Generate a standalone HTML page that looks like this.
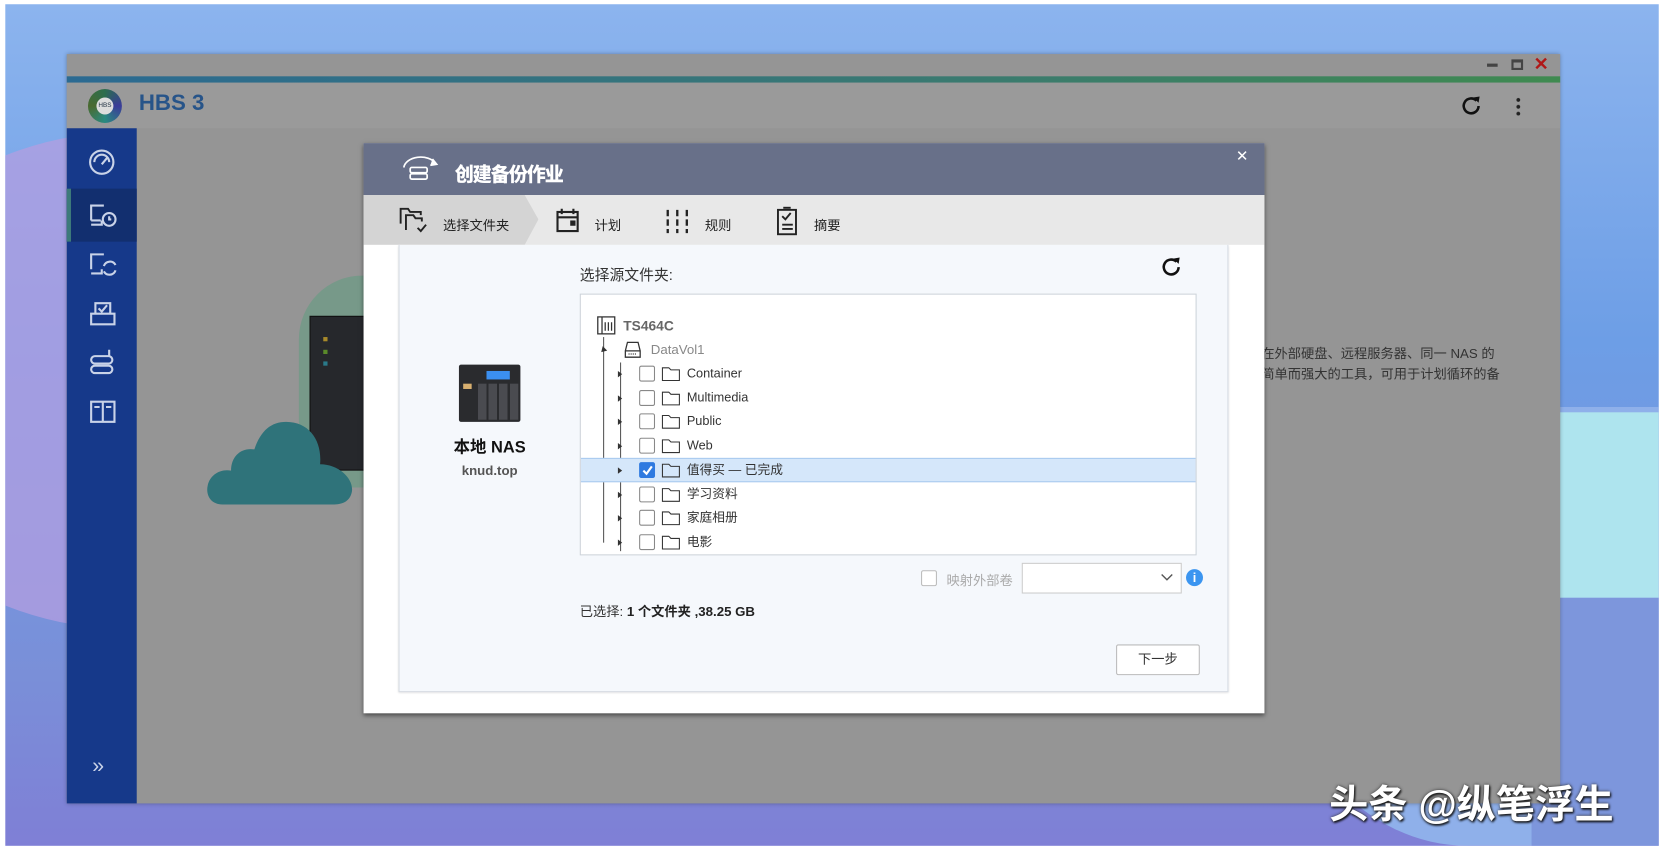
<!DOCTYPE html>
<html><head><meta charset="utf-8"><style>
*{margin:0;padding:0;box-sizing:border-box}
html,body{width:1662px;height:851px;overflow:hidden;background:#fff}
#s{position:absolute;left:0;top:0;width:1568px;height:802px;transform:scale(1.0599);transform-origin:0 0;font-family:"Liberation Sans","Noto Sans CJK SC",sans-serif;overflow:hidden}
.a{position:absolute}
.desk{left:5px;top:4px;width:1560px;height:794px;background:linear-gradient(180deg,#8cb4ee 0%,#6d9ee6 40%,#7a8fd8 80%,#7f7fd6 100%);overflow:hidden}
.row{position:absolute;left:0;height:23px;width:582px;font-size:12px;color:#333;line-height:23px}
.row .tri{position:absolute;left:35px;top:9px;width:0;height:0;border-left:4px solid #333;border-top:3px solid transparent;border-bottom:3px solid transparent}
.row .cb{position:absolute;left:55px;top:4px;width:15px;height:15px;border:1px solid #888;border-radius:2px;background:#fff}
.row .fd{position:absolute;left:76px;top:5px}
.row span.t{position:absolute;left:100px}
</style></head><body><div id="s">
<div class="a desk">
 <div class="a" style="left:-160px;top:120px;width:560px;height:470px;border-radius:50%;background:#b39ee0;opacity:.75"></div>
 <div class="a" style="left:1200px;top:380px;width:360px;height:414px;border-radius:50% 0 0 50%;background:#8fb0ea"></div>
 <div class="a" style="left:1460px;top:385px;width:100px;height:175px;background:#aee4ee"></div>
 <div class="a" style="left:1440px;top:560px;width:120px;height:234px;background:#7d96dc"></div>
</div>
<div class="a" style="left:63px;top:51px;width:1409px;height:707px;background:#959595;box-shadow:0 0 4px rgba(0,0,0,.3)"></div>
<div class="a" style="left:63px;top:72px;width:1409px;height:6px;background:linear-gradient(90deg,#2b6a92,#3a7a70 60%,#3f8a50)"></div>
<div class="a" style="left:63px;top:78px;width:1409px;height:43px;background:#9a9a9a"></div>
<div class="a" style="left:1403px;top:60px;width:10px;height:3px;background:#444"></div>
<div class="a" style="left:1426px;top:56px;width:11px;height:10px;border:2px solid #444;border-top-width:3px"></div>
<div class="a" style="left:1447px;top:51px;color:#b01818;font-size:17px;font-weight:bold">✕</div>
<div class="a" style="left:83px;top:84px;width:32px;height:32px;border-radius:50%;background:conic-gradient(#2c6e4e,#3b3b9a,#2a8a80,#4a6a30,#2c6e4e)"></div>
<div class="a" style="left:91px;top:92px;width:16px;height:16px;border-radius:50%;background:#ddd;font-size:6px;line-height:16px;text-align:center;color:#234">HBS</div>
<div class="a" style="left:131px;top:86px;font-size:21px;font-weight:bold;color:#275489">HBS 3</div>
<svg class="a" style="left:1378px;top:89px" width="20" height="20" viewBox="0 0 20 20"><path d="M15 6A7 7 0 1 0 17 11" fill="none" stroke="#111" stroke-width="2.4"/><path d="M12 3L18 2L17 8Z" fill="#111"/></svg>
<div class="a" style="left:1430px;top:91px;width:5px;height:18px;background:radial-gradient(circle,#222 1.6px,transparent 2px) 0 0/5px 6.5px"></div>
<div class="a" style="left:63px;top:121px;width:66px;height:637px;background:#16398a"></div>
<div class="a" style="left:63px;top:178px;width:66px;height:50px;background:#122f6f"></div>
<div class="a" style="left:63px;top:178px;width:4px;height:50px;background:#3d7a7a"></div>
<svg class="a" style="left:82px;top:139px" width="30" height="30" viewBox="0 0 30 30" fill="none" stroke="#c9d3e8" stroke-width="2"><circle cx="14" cy="14" r="11"/><path d="M7 14a7 7 0 0 1 14 0M14 16l5-6"/></svg>
<svg class="a" style="left:83px;top:190px" width="30" height="28" viewBox="0 0 30 28" fill="none" stroke="#c9d3e8" stroke-width="2"><path d="M3 18V4h12M3 18h9M3 22h10v-4"/><circle cx="20" cy="17" r="6"/><path d="M20 14v3h2"/></svg>
<svg class="a" style="left:83px;top:236px" width="30" height="28" viewBox="0 0 30 28" fill="none" stroke="#c9d3e8" stroke-width="2"><path d="M3 18V4h12M3 22h10v-4"/><path d="M15 15a6 6 0 0 1 11-1M26 19a6 6 0 0 1-11 1"/></svg>
<svg class="a" style="left:83px;top:282px" width="30" height="28" viewBox="0 0 30 28" fill="none" stroke="#c9d3e8" stroke-width="2"><path d="M3 14h22v10H3zM7 14V4h14v10M10 9l3 3 5-6"/></svg>
<svg class="a" style="left:83px;top:328px" width="30" height="28" viewBox="0 0 30 28" fill="none" stroke="#c9d3e8" stroke-width="2"><rect x="3" y="8" width="20" height="7" rx="3.5"/><rect x="3" y="17" width="20" height="7" rx="3.5"/><path d="M20 8V2"/></svg>
<svg class="a" style="left:83px;top:375px" width="30" height="28" viewBox="0 0 30 28" fill="none" stroke="#c9d3e8" stroke-width="2"><rect x="3" y="4" width="22" height="19"/><path d="M14 4v19M6 9h5M17 9h5"/></svg>
<div class="a" style="left:87px;top:712px;color:#c9d3e8;font-size:20px">»</div>
<div class="a" style="left:282px;top:260px;width:120px;height:200px;border-radius:60px 60px 0 0;background:#6f9a86;opacity:.8"></div>
<div class="a" style="left:292px;top:298px;width:60px;height:146px;background:#26282c;border:1px solid #111"></div>
<div class="a" style="left:305px;top:318px;width:4px;height:4px;background:#a88a2a"></div>
<div class="a" style="left:305px;top:330px;width:4px;height:4px;background:#5a8a2a"></div>
<div class="a" style="left:305px;top:341px;width:4px;height:4px;background:#2a7a8a"></div>
<svg class="a" style="left:194px;top:396px" width="140" height="82" viewBox="0 0 140 82"><path d="M16 80C4 80 0 70 2 62C4 52 14 46 24 48C24 34 34 26 46 28C52 10 62 2 76 2C98 2 110 20 108 42C126 42 140 56 138 68C136 78 128 80 120 80Z" fill="#2f737a"/></svg>
<div class="a" style="left:1190px;top:325px;font-size:12.5px;color:#333;line-height:19px">在外部硬盘、远程服务器、同一 NAS 的<br>简单而强大的工具，可用于计划循环的备</div>
<div class="a" style="left:343px;top:135px;width:850px;height:538px;background:#fff;box-shadow:0 2px 4px rgba(0,0,0,.5)"></div>
<div class="a" style="left:343px;top:135px;width:850px;height:49px;background:#687089"></div>
<svg class="a" style="left:378px;top:146px" width="38" height="26" viewBox="0 0 38 26" fill="none" stroke="#fff" stroke-width="1.6"><path d="M3 12A16 11 0 0 1 33 8"/><path d="M30 4l4 5-6 1" fill="#fff"/><rect x="9" y="12" width="16" height="5" rx="1.5"/><rect x="9" y="18" width="16" height="5" rx="1.5"/></svg>
<div class="a" style="left:429px;top:151px;font-size:18px;font-weight:900;color:#fff;letter-spacing:-1px">创建备份作业</div>
<div class="a" style="left:1166px;top:139px;font-size:14px;color:#fff">✕</div>
<div class="a" style="left:343px;top:184px;width:850px;height:47px;background:#e8e8e8"></div>
<div class="a" style="left:343px;top:184px;width:165px;height:47px;background:#d4d4d4;clip-path:polygon(0 0,152px 0,165px 23px,152px 47px,0 47px)"></div>
<svg class="a" style="left:376px;top:195px" width="32" height="26" viewBox="0 0 32 26" fill="none" stroke="#222" stroke-width="1.8"><path d="M2 16V2h7l2 3h10v3"/><path d="M7 22V8h7l2 3h6v3"/><path d="M18 20l3 3 5-6"/></svg>
<div class="a" style="left:418px;top:202px;font-size:12.5px;color:#222">选择文件夹</div>
<svg class="a" style="left:524px;top:196px" width="24" height="24" viewBox="0 0 24 24" fill="none" stroke="#222" stroke-width="2"><rect x="2" y="4" width="19" height="18"/><path d="M2 9h19M6 1v5M17 1v5"/><rect x="15" y="13" width="3" height="3" fill="#222"/></svg>
<div class="a" style="left:561px;top:202px;font-size:12.5px;color:#222">计划</div>
<svg class="a" style="left:627px;top:197px" width="24" height="24" viewBox="0 0 24 24" fill="none" stroke="#222" stroke-width="2.2"><path d="M3 1v22M12 1v22M21 1v22" stroke-dasharray="6 3"/></svg>
<div class="a" style="left:665px;top:202px;font-size:12.5px;color:#222">规则</div>
<svg class="a" style="left:731px;top:195px" width="24" height="28" viewBox="0 0 24 28" fill="none" stroke="#222" stroke-width="1.8"><rect x="3" y="3" width="17" height="23"/><path d="M8 1h7M7 9l3 3 5-6M7 17h10M7 21h10"/></svg>
<div class="a" style="left:768px;top:202px;font-size:12.5px;color:#222">摘要</div>
<div class="a" style="left:376px;top:231px;width:783px;height:422px;background:#f5f8fc;border:1px solid #d8dde4;border-top:none;box-shadow:0 1px 2px rgba(0,0,0,.15)"></div>
<div class="a" style="left:433px;top:344px;width:58px;height:54px;background:#2a2b2e;border-radius:2px"></div>
<div class="a" style="left:459px;top:350px;width:22px;height:8px;background:#3b8ff0"></div>
<div class="a" style="left:437px;top:362px;width:8px;height:5px;background:#d8b070"></div>
<div class="a" style="left:451px;top:362px;width:38px;height:34px;background:repeating-linear-gradient(90deg,#4a4b50 0 8px,#2a2b2e 8px 10px)"></div>
<div class="a" style="left:404px;top:410px;width:116px;text-align:center;font-size:15.5px;font-weight:bold;color:#111">本地 NAS</div>
<div class="a" style="left:404px;top:437px;width:116px;text-align:center;font-size:12.5px;font-weight:bold;color:#555">knud.top</div>
<div class="a" style="left:547px;top:249px;font-size:14px;color:#333">选择源文件夹:</div>
<svg class="a" style="left:1095px;top:241px" width="20" height="20" viewBox="0 0 20 20"><path d="M15 6A7 7 0 1 0 17 11" fill="none" stroke="#111" stroke-width="2.4"/><path d="M12 3L18 2L17 8Z" fill="#111"/></svg>
<div class="a" style="left:547px;top:277px;width:582px;height:247px;background:#fff;border:1px solid #cdd3da;overflow:hidden">
 <svg class="a" style="left:15px;top:20px" width="18" height="18" viewBox="0 0 18 18" fill="none" stroke="#333" stroke-width="1.2"><rect x="1" y="1" width="16" height="16"/><path d="M5 1v16M8 6v8M11 6v8M14 6v8"/></svg>
 <div class="a" style="left:40px;top:22px;font-size:13px;font-weight:bold;color:#666">TS464C</div>
 <div class="a" style="left:21px;top:40px;width:1px;height:194px;background:#555"></div>
 <div class="a" style="left:18px;top:50px;width:0;height:0;border-left:3px solid transparent;border-right:3px solid transparent;border-top:5px solid #333;transform:rotate(45deg)"></div>
 <svg class="a" style="left:40px;top:43px" width="18" height="18" viewBox="0 0 18 18" fill="none" stroke="#333" stroke-width="1.2"><path d="M4 2h10l2 8v6H2v-6z M2 10h14"/><path d="M5 13h8" stroke-dasharray="1 1"/></svg>
 <div class="a" style="left:66px;top:45px;font-size:12.5px;color:#888">DataVol1</div>
 <div class="a" style="left:37px;top:64px;width:1px;height:178px;background:#555"></div>
 <div class="row" style="top:63px"><i class="tri"></i><i class="cb"></i><svg class="fd" width="18" height="14" viewBox="0 0 18 14" fill="none" stroke="#333"><path d="M1 1h6l2 2h8v10H1z"/></svg><span class="t">Container</span></div>
 <div class="row" style="top:86px"><i class="tri"></i><i class="cb"></i><svg class="fd" width="18" height="14" viewBox="0 0 18 14" fill="none" stroke="#333"><path d="M1 1h6l2 2h8v10H1z"/></svg><span class="t">Multimedia</span></div>
 <div class="row" style="top:108px"><i class="tri"></i><i class="cb"></i><svg class="fd" width="18" height="14" viewBox="0 0 18 14" fill="none" stroke="#333"><path d="M1 1h6l2 2h8v10H1z"/></svg><span class="t">Public</span></div>
 <div class="row" style="top:131px"><i class="tri"></i><i class="cb"></i><svg class="fd" width="18" height="14" viewBox="0 0 18 14" fill="none" stroke="#333"><path d="M1 1h6l2 2h8v10H1z"/></svg><span class="t">Web</span></div>
 <div class="row" style="top:154px;background:#d5e7fa;border-top:1px solid #a9cbef;border-bottom:1px solid #a9cbef;line-height:21px"><i class="tri" style="top:8px"></i><i class="cb" style="top:3px;background:#2f7ae0;border-color:#2f7ae0"></i><svg class="a" style="left:57px;top:5px" width="12" height="12" viewBox="0 0 12 12"><path d="M2 6l3 3 5-7" fill="none" stroke="#fff" stroke-width="2"/></svg><svg class="fd" style="top:4px" width="18" height="14" viewBox="0 0 18 14" fill="none" stroke="#333"><path d="M1 1h6l2 2h8v10H1z"/></svg><span class="t">值得买 — 已完成</span></div>
 <div class="row" style="top:177px"><i class="tri"></i><i class="cb"></i><svg class="fd" width="18" height="14" viewBox="0 0 18 14" fill="none" stroke="#333"><path d="M1 1h6l2 2h8v10H1z"/></svg><span class="t">学习资料</span></div>
 <div class="row" style="top:199px"><i class="tri"></i><i class="cb"></i><svg class="fd" width="18" height="14" viewBox="0 0 18 14" fill="none" stroke="#333"><path d="M1 1h6l2 2h8v10H1z"/></svg><span class="t">家庭相册</span></div>
 <div class="row" style="top:222px"><i class="tri"></i><i class="cb"></i><svg class="fd" width="18" height="14" viewBox="0 0 18 14" fill="none" stroke="#333"><path d="M1 1h6l2 2h8v10H1z"/></svg><span class="t">电影</span></div>
</div>
<div class="a" style="left:869px;top:538px;width:15px;height:15px;border:1px solid #bbb;border-radius:2px;background:#fff"></div>
<div class="a" style="left:893px;top:537px;font-size:12.5px;color:#aaa">映射外部卷</div>
<div class="a" style="left:964px;top:531px;width:151px;height:29px;border:1px solid #ccc;background:#fff"></div>
<svg class="a" style="left:1095px;top:540px" width="12" height="10" viewBox="0 0 12 10"><path d="M1 2l5 5 5-5" fill="none" stroke="#555" stroke-width="1.3"/></svg>
<div class="a" style="left:1119px;top:537px;width:16px;height:16px;border-radius:50%;background:#3b95f0;color:#fff;font-size:12px;font-weight:bold;text-align:center;line-height:16px">i</div>
<div class="a" style="left:547px;top:566px;font-size:12.5px;color:#333">已选择: <b style="color:#222">1 个文件夹 ,38.25 GB</b></div>
<div class="a" style="left:1053px;top:608px;width:79px;height:29px;border:1px solid #bbb;border-radius:2px;background:#fff;font-size:12.5px;color:#333;text-align:center;line-height:27px">下一步</div>
<div class="a" style="left:1254px;top:738px;font-size:37px;line-height:44px;font-weight:bold;color:#fff;text-shadow:0 0 3px #333,1px 1px 2px #000">头条 @纵笔浮生</div>
</div></body></html>
